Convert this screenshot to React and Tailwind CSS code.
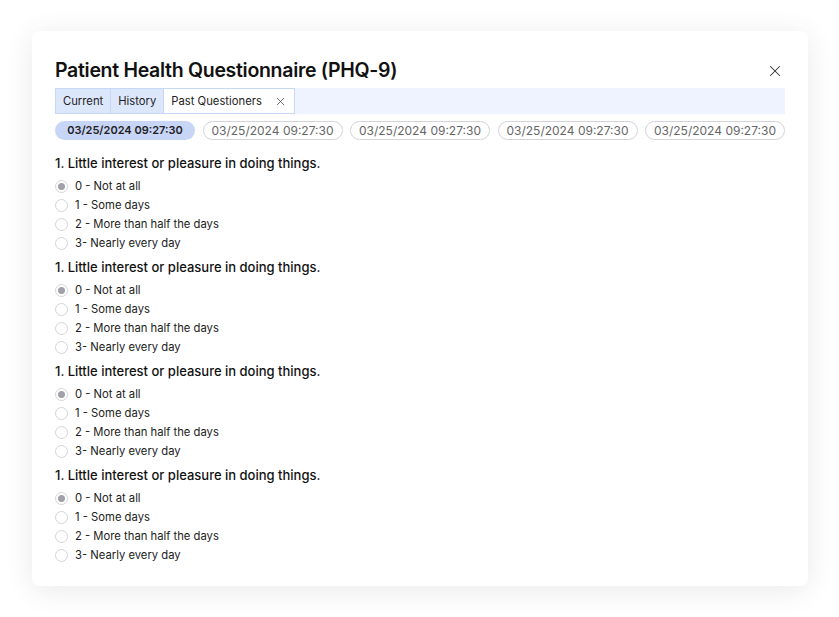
import { X } from "lucide-react";

const DATES = [
  "03/25/2024 09:27:30",
  "03/25/2024 09:27:30",
  "03/25/2024 09:27:30",
  "03/25/2024 09:27:30",
  "03/25/2024 09:27:30",
];

const OPTIONS = [
  "0 - Not at all",
  "1 - Some days",
  "2 - More than half the days",
  "3- Nearly every day",
];

function Radio({ checked }) {
  return (
    <span className="w-[13px] h-[13px] rounded-full border border-[#d4d4d8] bg-white flex items-center justify-center shrink-0">
      {checked && <span className="w-[7px] h-[7px] rounded-full bg-[#a1a1aa]" />}
    </span>
  );
}

function Question() {
  return (
    <div className="flex flex-col">
      <h3 className="text-[13px] leading-[20px] font-medium text-[#111]">
        1. Little interest or pleasure in doing things.
      </h3>
      <div className="mt-[4px] flex flex-col">
        {OPTIONS.map((o, i) => (
          <label key={i} className="flex items-center gap-[7px] h-[19px]">
            <Radio checked={i === 0} />
            <span className="text-[11.25px] text-[#222]">{o}</span>
          </label>
        ))}
      </div>
    </div>
  );
}

export default function App() {
  return (
    <div
      className="min-h-[617px] bg-white pl-[32px] pr-[31px] pt-[31px] pb-[32px]"
      style={{ fontFamily: "Inter, 'Open Sans', sans-serif" }}
    >
      <div className="bg-white rounded-[8px] shadow-[0_4px_30px_rgba(0,0,0,0.09)] px-[23px] pt-[26px] pb-[21px]">
        <div className="flex items-center justify-between h-[28px]">
          <h2 className="text-[19.5px] font-semibold text-[#111] tracking-[-0.3px]">
            Patient Health Questionnaire (PHQ-9)
          </h2>
          <button className="text-[#333] mr-[1px]">
            <X size={18} strokeWidth={1.4} />
          </button>
        </div>

        <div className="mt-[3px] flex h-[26px] bg-[#eef3ff]">
          <div className="px-[7px] flex items-center text-[11.25px] text-[#222] bg-[#dde7fc] border border-[#c9d7f6]">
            Current
          </div>
          <div className="px-[7px] flex items-center text-[11.25px] text-[#222] bg-[#dde7fc] border-y border-r border-[#c9d7f6]">
            History
          </div>
          <div className="px-[7px] flex items-center gap-[12px] text-[11.25px] text-[#222] bg-white border-y border-r border-[#c9d7f6]">
            Past Questioners
            <X size={13} strokeWidth={1.4} className="text-[#444]" />
          </div>
        </div>

        <div className="mt-[7px] flex justify-between">
          {DATES.map((d, i) => (
            <span
              key={i}
              className={
                "w-[140px] h-[19px] rounded-full flex items-center justify-center " +
                (i === 0
                  ? "bg-[#c7d5f6] font-semibold text-[11px] text-[#222]"
                  : "border border-[#d4d4d8] text-[12px] text-[#666]")
              }
            >
              {d}
            </span>
          ))}
        </div>

        <div className="mt-[13px] flex flex-col gap-[4px]">
          <Question />
          <Question />
          <Question />
          <Question />
        </div>
      </div>
    </div>
  );
}
